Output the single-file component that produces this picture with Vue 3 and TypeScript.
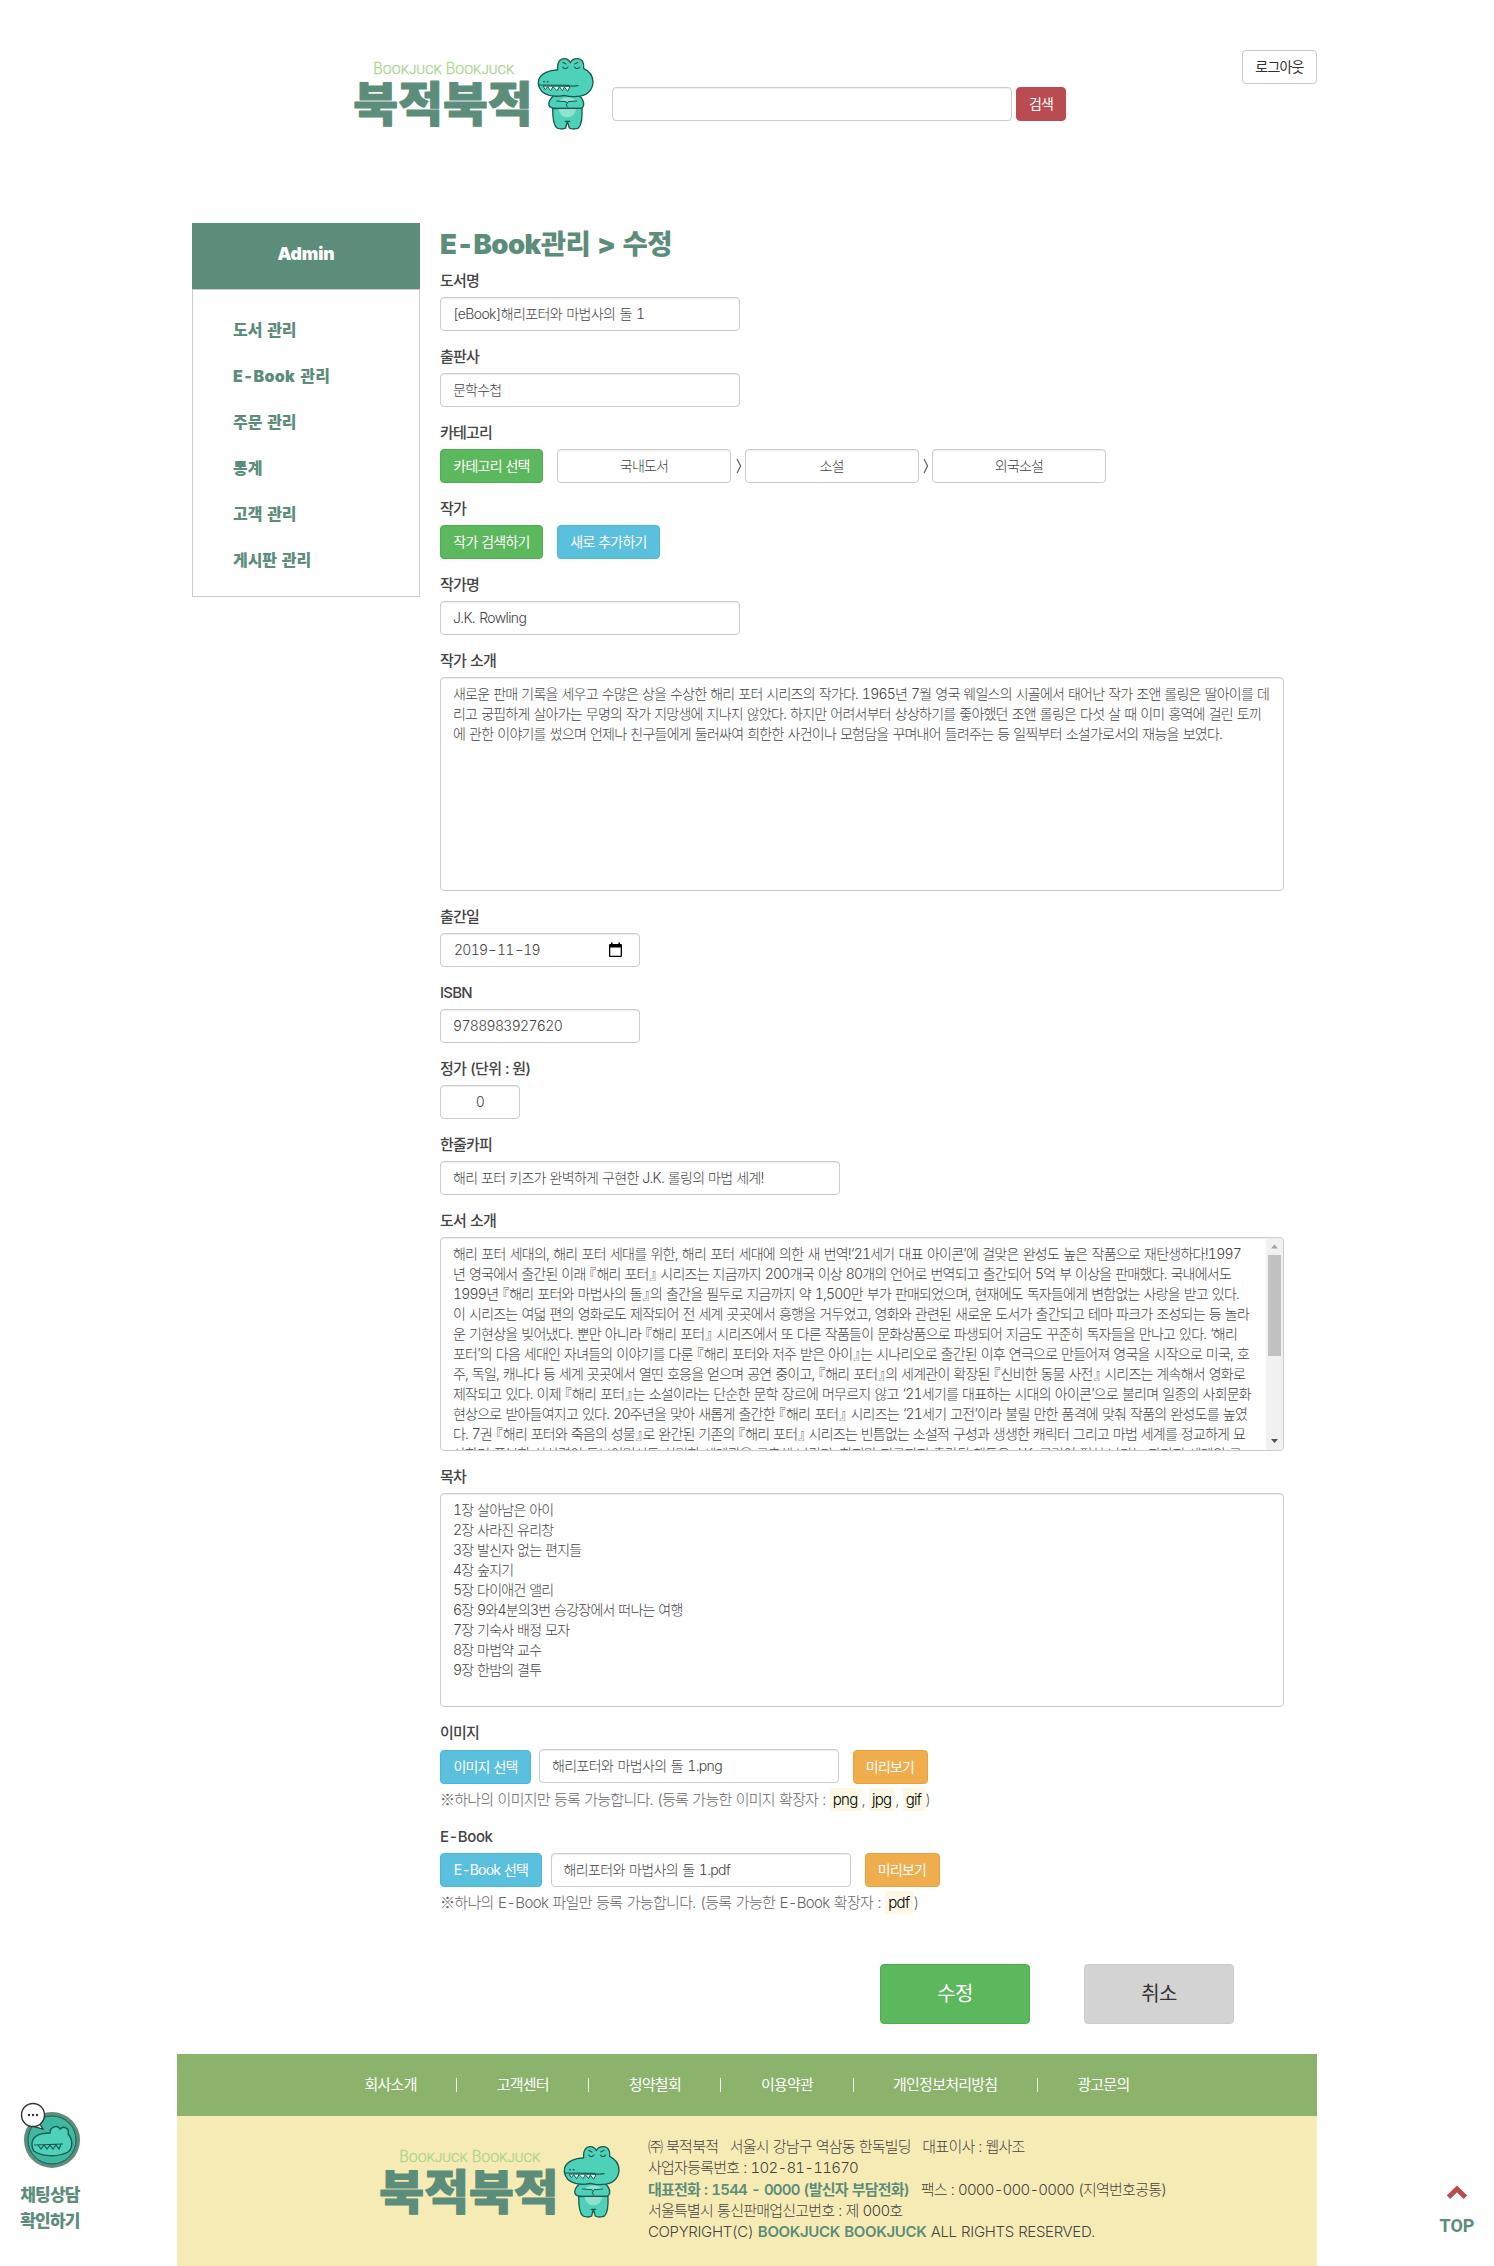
<script setup lang="ts">
import { defineComponent, h } from 'vue'

interface Line {
  text: string
  w: number
}

const menu: string[] = ['도서 관리', 'E-Book 관리', '주문 관리', '통계', '고객 관리', '게시판 관리']

const authorIntro: Line[] = [
  { text: '새로운 판매 기록을 세우고 수많은 상을 수상한 해리 포터 시리즈의 작가다. 1965년 7월 영국 웨일스의 시골에서 태어난 작가 조앤 롤링은 딸아이를 데', w: 816 },
  { text: '리고 궁핍하게 살아가는 무명의 작가 지망생에 지나지 않았다. 하지만 어려서부터 상상하기를 좋아했던 조앤 롤링은 다섯 살 때 이미 홍역에 걸린 토끼', w: 808 },
  { text: '에 관한 이야기를 썼으며 언제나 친구들에게 둘러싸여 희한한 사건이나 모험담을 꾸며내어 들려주는 등 일찍부터 소설가로서의 재능을 보였다.', w: 769 },
]

const bookIntro: Line[] = [
  { text: '해리 포터 세대의, 해리 포터 세대를 위한, 해리 포터 세대에 의한 새 번역!‘21세기 대표 아이콘’에 걸맞은 완성도 높은 작품으로 재탄생하다!1997', w: 788 },
  { text: '년 영국에서 출간된 이래 『해리 포터』 시리즈는 지금까지 200개국 이상 80개의 언어로 번역되고 출간되어 5억 부 이상을 판매했다. 국내에서도', w: 778 },
  { text: '1999년 『해리 포터와 마법사의 돌』의 출간을 필두로 지금까지 약 1,500만 부가 판매되었으며, 현재에도 독자들에게 변함없는 사랑을 받고 있다.', w: 786 },
  { text: '이 시리즈는 여덟 편의 영화로도 제작되어 전 세계 곳곳에서 흥행을 거두었고, 영화와 관련된 새로운 도서가 출간되고 테마 파크가 조성되는 등 놀라', w: 796 },
  { text: '운 기현상을 빚어냈다. 뿐만 아니라 『해리 포터』 시리즈에서 또 다른 작품들이 문화상품으로 파생되어 지금도 꾸준히 독자들을 만나고 있다. ‘해리', w: 784 },
  { text: '포터’의 다음 세대인 자녀들의 이야기를 다룬 『해리 포터와 저주 받은 아이』는 시나리오로 출간된 이후 연극으로 만들어져 영국을 시작으로 미국, 호', w: 796 },
  { text: '주, 독일, 캐나다 등 세계 곳곳에서 열띤 호응을 얻으며 공연 중이고, 『해리 포터』의 세계관이 확장된 『신비한 동물 사전』 시리즈는 계속해서 영화로', w: 792 },
  { text: '제작되고 있다. 이제 『해리 포터』는 소설이라는 단순한 문학 장르에 머무르지 않고 ‘21세기를 대표하는 시대의 아이콘’으로 불리며 일종의 사회문화', w: 798 },
  { text: '현상으로 받아들여지고 있다. 20주년을 맞아 새롭게 출간한 『해리 포터』 시리즈는 ‘21세기 고전’이라 불릴 만한 품격에 맞춰 작품의 완성도를 높였', w: 794 },
  { text: '다. 7권 『해리 포터와 죽음의 성물』로 완간된 기존의 『해리 포터』 시리즈는 빈틈없는 소설적 구성과 생생한 캐릭터 그리고 마법 세계를 정교하게 묘', w: 792 },
  { text: '사하며 풍부한 상상력이 돋보이면서도 치밀한 세계관을 구축해 나간다. 하지만 지금까지 출간된 책들은 J.K. 롤링이 펼쳐 나가는 판타지 세계의 규', w: 788 },
]

const chapters: string[] = [
  '1장 살아남은 아이',
  '2장 사라진 유리창',
  '3장 발신자 없는 편지들',
  '4장 숲지기',
  '5장 다이애건 앨리',
  '6장 9와4분의3번 승강장에서 떠나는 여행',
  '7장 기숙사 배정 모자',
  '8장 마법약 교수',
  '9장 한밤의 결투',
]

const footerLinks: string[] = ['회사소개', '고객센터', '청약철회', '이용약관', '개인정보처리방침', '광고문의']

const INK = '#1c5a50'

const BrandLogo = defineComponent({
  name: 'BrandLogo',
  setup() {
    const p = (d: string, attrs: Record<string, unknown> = {}) =>
      h('path', { d, fill: 'none', stroke: INK, 'stroke-width': 4, 'stroke-linecap': 'round', 'stroke-linejoin': 'round', ...attrs })
    return () =>
      h('svg', { width: 245, height: 76, viewBox: '60 78 735 228', style: 'display:block' }, [
        h('text', { x: 130, y: 131, 'font-size': 47, 'font-family': 'Roboto, Inter, sans-serif', 'font-weight': 300, fill: '#add58f', stroke: '#add58f', 'stroke-width': 1, textLength: 423, lengthAdjust: 'spacingAndGlyphs', style: 'font-variant: small-caps; letter-spacing: 0' }, 'Bookjuck Bookjuck'),
        h('text', { x: 70, y: 272, 'font-size': 139, 'font-family': '"Noto Sans CJK KR", sans-serif', 'font-weight': 900, fill: '#5c8d7b', stroke: '#5c8d7b', 'stroke-width': 3.5, 'stroke-linejoin': 'round', textLength: 538, lengthAdjust: 'spacingAndGlyphs', style: 'letter-spacing: 0' }, '북적북적'),
        p('M668 236 C668 262 670 284 680 293 C684 298 702 298 707 294 L712 274 L718 294 C724 298 741 298 746 293 C755 284 757 258 756 234 Z', { fill: '#4dd2b9' }),
        h('ellipse', { cx: 712, cy: 232, rx: 27, ry: 30, fill: '#8fe2d0' }),
        p('M672 197 C660 205 654 218 657 227 C661 235 672 236 684 235 L742 235 C752 236 760 232 761 225 C762 214 755 203 746 197 Z', { fill: '#4dd2b9' }),
        h('path', { d: 'M688 214 C694 199 731 199 737 214 Z', fill: '#8fe2d0' }),
        p('M680 213 L706 215 M740 213 L715 215 M707 216 L713 219 L708 225 L713 231 M668 235 L755 235', { 'stroke-width': 3 }),
        p('M683 120 C681 96 690 86 703 86 C713 86 718 92 721 98 C724 91 732 86 742 86 C756 86 763 98 761 115 C780 124 789 139 789 157 C788 184 766 199 741 199 C727 202 714 199 703 196 C684 200 663 201 645 191 C629 182 622 164 626 149 C633 131 659 119 683 120 Z', { fill: '#4dd2b9' }),
        p('M626 165 L716 166 C722 171 733 168 744 167', { 'stroke-width': 3.5 }),
        p('M640 169 L646 179 L653 170 L662 182 L669 170 L681 182 L688 170 L698 182 L703 171 L713 184 L720 170 Z', { fill: '#e9fff7', 'stroke-width': 3 }),
        p('M698 97 L708 102 M744 97 L734 102 M698 111 Q706 121 714 111 M733 111 Q741 121 749 111', { 'stroke-width': 3.5 }),
        h('circle', { cx: 642, cy: 155, r: 2.8, fill: INK }),
        h('circle', { cx: 653, cy: 155, r: 2.8, fill: INK }),
        p('M706 274 L719 274', { 'stroke-width': 4 }),
      ])
  },
})
</script>

<template>
  <div class="page">
    <header class="head">
      <BrandLogo class="logo" />
      <form class="search" @submit.prevent>
        <div class="ctl w400"></div>
        <button class="btn red" type="submit">검색</button>
      </form>
      <button class="btn plain logout" type="button">로그아웃</button>
    </header>

    <div class="body">
      <aside class="side">
        <div class="side-title">Admin</div>
        <ul class="side-menu">
          <li v-for="m in menu" :key="m" :class="{ latin: m.startsWith('E') }">{{ m }}</li>
        </ul>
      </aside>

      <main class="main">
        <h1>E-Book관리 &gt; 수정</h1>

        <section class="group">
          <label>도서명</label>
          <div class="ctl w300 title">[eBook]해리포터와 마법사의 돌 1</div>
        </section>
        <section class="group">
          <label>출판사</label>
          <div class="ctl w300">문학수첩</div>
        </section>
        <section class="group">
          <label>카테고리</label>
          <div class="row">
            <button class="btn green w103" type="button">카테고리 선택</button>
            <div class="cats">
              <div class="ctl mid w174">국내도서</div>
              <svg class="sep" width="6" height="16" viewBox="0 0 6 16"><path d="M1 1 L4.6 8 L1 15" /></svg>
              <div class="ctl mid w174">소설</div>
              <svg class="sep" width="6" height="16" viewBox="0 0 6 16"><path d="M1 1 L4.6 8 L1 15" /></svg>
              <div class="ctl mid w174">외국소설</div>
            </div>
          </div>
        </section>
        <section class="group">
          <label>작가</label>
          <div class="row">
            <button class="btn green w103" type="button">작가 검색하기</button>
            <button class="btn blue w103" type="button">새로 추가하기</button>
          </div>
        </section>
        <section class="group">
          <label>작가명</label>
          <div class="ctl w300 title">J.K. Rowling</div>
        </section>
        <section class="group">
          <label>작가 소개</label>
          <div class="ctl area">
            <p v-for="l in authorIntro" :key="l.text" class="line" :style="{ width: l.w + 'px' }">{{ l.text }}</p>
          </div>
        </section>
        <section class="group">
          <label>출간일</label>
          <div class="ctl w200 date">
            <span>2019<i>-</i>11<i>-</i>19</span>
            <svg width="15" height="16" viewBox="0 0 15 16">
              <path d="M2 2 h11 a1 1 0 0 1 1 1 v11 a1 1 0 0 1 -1 1 h-11 a1 1 0 0 1 -1 -1 v-11 a1 1 0 0 1 1 -1 Z M2.3 5.6 v8.1 h10.4 v-8.1 Z" fill="#000" fill-rule="evenodd" />
              <path d="M3 .5 h1.6 v2 h-1.6 Z M10.4 .5 h1.6 v2 h-1.6 Z" fill="#000" />
            </svg>
          </div>
        </section>
        <section class="group">
          <label>ISBN</label>
          <div class="ctl w200 num">9788983927620</div>
        </section>
        <section class="group">
          <label>정가 (단위 : 원)</label>
          <div class="ctl w80 mid">0</div>
        </section>
        <section class="group">
          <label>한줄카피</label>
          <div class="ctl w400 copyline">해리 포터 키즈가 완벽하게 구현한 J.K. 롤링의 마법 세계!</div>
        </section>
        <section class="group">
          <label>도서 소개</label>
          <div class="ctl area scroll">
            <div class="scroll-text">
              <p v-for="l in bookIntro" :key="l.text" class="line" :style="{ width: l.w + 'px' }">{{ l.text }}</p>
            </div>
            <div class="bar">
              <svg width="17" height="17" viewBox="0 0 17 17"><path d="M5 10.5 L8.5 6.5 L12 10.5 Z" fill="#a3a3a3" /></svg>
              <div class="thumb"></div>
              <svg width="17" height="17" viewBox="0 0 17 17"><path d="M5 6 L8.5 10 L12 6 Z" fill="#505050" /></svg>
            </div>
          </div>
        </section>
        <section class="group">
          <label>목차</label>
          <div class="ctl area">
            <p v-for="c in chapters" :key="c">{{ c }}</p>
          </div>
        </section>
        <section class="group file">
          <label>이미지</label>
          <div class="row tall">
            <button class="btn blue w91" type="button">이미지 선택</button>
            <div class="ctl w300 name first title">해리포터와 마법사의 돌 1.png</div>
            <button class="btn orange" type="button">미리보기</button>
          </div>
          <p class="note"><span class="star">※</span>하나의 이미지만 등록 가능합니다. (등록 가능한 이미지 확장자 : <mark>png</mark>, <mark>jpg</mark>, <mark>gif</mark>)</p>
        </section>
        <section class="group file">
          <label class="wide">E-Book</label>
          <div class="row">
            <button class="btn blue w102" type="button">E-Book 선택</button>
            <div class="ctl w300 name title">해리포터와 마법사의 돌 1.pdf</div>
            <button class="btn orange" type="button">미리보기</button>
          </div>
          <p class="note long"><span class="star">※</span>하나의 E-Book 파일만 등록 가능합니다. (등록 가능한 E-Book 확장자 : <mark>pdf</mark>)</p>
        </section>

        <div class="actions">
          <button class="btn green big" type="button">수정</button>
          <button class="btn gray big" type="button">취소</button>
        </div>
      </main>
    </div>

    <footer class="foot">
      <nav class="foot-nav">
        <template v-for="(f, i) in footerLinks" :key="f">
          <i v-if="i > 0"></i>
          <a>{{ f }}</a>
        </template>
      </nav>
      <div class="foot-info">
        <BrandLogo />
        <address>
          <p class="addr">㈜ 북적북적 &nbsp; 서울시 강남구 역삼동 한독빌딩 &nbsp; 대표이사 : 웹사조</p>
          <p class="reg">사업자등록번호 : 102-81-11670</p>
          <p><b>대표전화 : 1544 - 0000 (발신자 부담전화)</b> &nbsp; <span class="fax">팩스 : 0000-000-0000 (지역번호공통)</span></p>
          <p>서울특별시 통신판매업신고번호 : 제 000호</p>
          <p class="copy">COPYRIGHT(C) <b>BOOKJUCK BOOKJUCK</b> ALL RIGHTS RESERVED.</p>
        </address>
      </div>
    </footer>

    <a class="chat">
      <svg width="62" height="70" viewBox="0 0 62 70">
        <circle cx="33" cy="39" r="28" fill="#5c8d7b" />
        <circle cx="33" cy="39" r="24" fill="#3fb8a2" stroke="#1c5a50" stroke-width="1" />
        <path d="M13 42 C14 33 24 32 31 32 C31 25 39 24 41 28 C45 24 51 28 49 33 C54 38 54 47 49 51 C38 57 21 55 15 50 C13 48 13 45 13 42 Z" fill="#4dd2b9" stroke="#1c5a50" stroke-width="1.4" />
        <path d="M15 44 L44 43 M19 44 L22 48 L25 44 L28 48 L31 44 L34 48 L37 44 L40 48 L42 43" fill="none" stroke="#1c5a50" stroke-width="1.2" />
        <path d="M20 22 L24 28 L13 25 Z" fill="#fff" stroke="#333" stroke-width="1.2" />
        <circle cx="14" cy="14" r="11.5" fill="#fff" stroke="#333" stroke-width="1.4" />
        <g fill="#333"><circle cx="10" cy="14" r="1.2" /><circle cx="14" cy="14" r="1.2" /><circle cx="18" cy="14" r="1.2" /></g>
      </svg>
      <span>채팅상담<br />확인하기</span>
    </a>
    <a class="top">
      <svg width="22" height="15" viewBox="0 0 22 15"><path d="M2.5 12.2 L11 4 L19.5 12.2" fill="none" stroke="#bb4b52" stroke-width="5" /></svg>
      <span>TOP</span>
    </a>
  </div>
</template>

<style>
body {
  margin: 0;
  background: #fff;
}
</style>

<style scoped>
* {
  box-sizing: border-box;
}
.page {
  position: relative;
  width: 1494px;
  height: 2266px;
  overflow: hidden;
  font-family: Inter, "Noto Sans CJK KR", sans-serif;
  font-feature-settings: "tnum", "halt";
  font-size: 14px;
  line-height: 20px;
  font-weight: 300;
  letter-spacing: -0.055em;
  word-spacing: 0.05em;
  color: #444;
}
p {
  margin: 0;
  white-space: nowrap;
}
.head {
  display: flex;
  align-items: flex-start;
  width: 1140px;
  height: 223px;
  margin: 0 auto;
  padding-left: 173px;
}
.logo {
  margin-top: 56px;
}
.search {
  display: flex;
  gap: 4px;
  margin: 87px 0 0 17px;
}
.logout {
  margin: 50px 0 0 auto;
  width: 75px;
}
.btn {
  height: 34px;
  padding: 0;
  border: 1px solid;
  border-radius: 4px;
  font: inherit;
  font-weight: 400;
  letter-spacing: inherit;
  word-spacing: inherit;
  color: #fff;
  text-align: center;
  white-space: nowrap;
  flex: none;
}
.plain { background: #fff; border-color: #ccc; color: #333; }
.red { background: #bb4b52; border-color: #bb4b52; width: 50px; }
.green { background: #5cb85c; border-color: #4cae4c; }
.blue { background: #5bc0de; border-color: #46b8da; }
.orange { background: #f0ad4e; border-color: #eea236; width: 75px; }
.gray { background: #d3d3d3; border-color: #ccc; color: #333; }
.big {
  width: 150px;
  height: 60px;
  font-size: 20px;
}
.ctl {
  height: 34px;
  padding: 6px 12px;
  border: 1px solid #ccc;
  border-radius: 4px;
  background: #fff;
  box-shadow: inset 0 1px 1px rgba(0, 0, 0, 0.075);
  white-space: nowrap;
  flex: none;
}
.w80 { width: 80px; }
.w91 { width: 91px; }
.w102 { width: 102px; }
.w103 { width: 103px; }
.w174 { width: 174px; }
.w200 { width: 200px; }
.w300 { width: 300px; }
.w400 { width: 400px; }
.mid { text-align: center; }
.num { letter-spacing: -0.048em; }
.title {
  letter-spacing: -0.045em;
  word-spacing: 0.08em;
}
.copyline {
  letter-spacing: -0.05em;
}
.body {
  display: flex;
  width: 1140px;
  height: 1831px;
  margin: 0 auto;
  padding-left: 15px;
  gap: 20px;
}
.side {
  width: 228px;
  flex: none;
  font-weight: 900;
  font-size: 16px;
  letter-spacing: -0.005em;
}
.side-title {
  height: 66px;
  line-height: 62px;
  background: #5c8d7b;
  color: #fff;
  text-align: center;
  font-size: 17.5px;
}
.side-menu {
  margin: 0;
  padding: 17px 0 0 40px;
  height: 308px;
  border: 1px solid #ccc;
  list-style: none;
  color: #5c8d7b;
}
.side-menu li {
  height: 46px;
  line-height: 46px;
}
.side-menu .latin {
  letter-spacing: 0.015em;
}
.main {
  width: 844px;
  flex: none;
}
h1 {
  margin: 0;
  height: 47px;
  line-height: 42px;
  font-size: 27.5px;
  font-weight: 900;
  letter-spacing: -0.02em;
  color: #5c8d7b;
  white-space: nowrap;
}
.group {
  margin-bottom: 15px;
}
label {
  display: block;
  padding-top: 1px;
  margin-bottom: 6px;
  font-size: 15px;
  font-weight: 500;
}
.wide {
  letter-spacing: -0.03em;
}
.row {
  display: flex;
  gap: 14px;
}
.tall {
  height: 35px;
}
.tall .btn {
  margin-top: 1px;
}
.cats {
  display: flex;
  align-items: center;
}
.sep {
  margin: 0 3px 0 4.5px;
  fill: none;
  stroke: #555;
  stroke-width: 1.1;
}
.area {
  width: 844px;
  height: 214px;
}
.line {
  text-align: justify;
  text-align-last: justify;
  letter-spacing: -0.055em;
  word-spacing: 0;
}
.scroll {
  display: flex;
  justify-content: space-between;
  padding: 0 0 0 12px;
  overflow: hidden;
}
.scroll-text {
  padding-top: 6px;
}
.bar {
  display: flex;
  flex-direction: column;
  align-items: center;
  width: 17px;
  height: 212px;
  background: #f1f1f1;
}
.thumb {
  width: 13px;
  height: 101px;
  margin-bottom: auto;
  background: #c1c1c1;
}
.date {
  display: flex;
  justify-content: space-between;
  padding: 6px 16px 6px 13px;
  letter-spacing: -0.05em;
}
.date i {
  display: inline-block;
  width: 9.5px;
  text-align: center;
  font-style: normal;
  transform: scaleX(1.4);
}
.date svg {
  margin-top: 2px;
}
.file {
  margin-bottom: 17px;
}
.file .row {
  gap: 0;
}
.name {
  margin: 0 14px 0 8.5px;
}
.first {
  margin-left: 8px;
  margin-right: 13.5px;
}
.note {
  height: 20px;
  margin-top: 5px;
  font-size: 15px;
  letter-spacing: -0.05em;
  word-spacing: 0.06em;
  color: #666;
}
.long {
  letter-spacing: -0.044em;
}
.star {
  font-family: "Noto Sans CJK KR", sans-serif;
}
mark {
  padding: 2px 4px 2px 3px;
  background: #fcf8e3;
  color: #000;
}
.actions {
  display: flex;
  gap: 54px;
  margin: 52px 0 0 440px;
}
.foot {
  width: 1140px;
  margin: 0 auto;
  font-size: 15px;
}
.foot-nav {
  display: flex;
  justify-content: center;
  align-items: center;
  gap: 39.5px;
  height: 62px;
  padding-bottom: 1px;
  background: #8cb36b;
  color: #fff;
  font-weight: 400;
}
.foot-nav i {
  width: 1px;
  height: 14px;
  background: #fff;
}
.foot-info {
  display: flex;
  height: 150px;
  padding: 28px 0 0 199px;
  background: #f7ebb5;
}
address {
  margin: -8px 0 0 27px;
  font-style: normal;
  line-height: 21.3px;
}
address b {
  font-weight: 600;
  color: #5c8d7b;
}
.addr {
  word-spacing: 0.04em;
}
.reg {
  letter-spacing: -0.05em;
}
.fax {
  letter-spacing: -0.052em;
}
.copy {
  letter-spacing: -0.023em;
}
.chat {
  position: absolute;
  left: 19px;
  top: 2101px;
  width: 62px;
  text-align: center;
  font-size: 17px;
  font-weight: 900;
  line-height: 26px;
  color: #5c8d7b;
}
.chat svg {
  display: block;
  margin-bottom: 11px;
}
.top {
  position: absolute;
  left: 1437px;
  top: 2185px;
  width: 40px;
  text-align: center;
  font-family: Roboto, sans-serif;
  font-size: 18px;
  font-weight: 700;
  letter-spacing: 0;
  color: #5c8d7b;
}
.top svg {
  display: block;
  margin: 0 auto 16px;
}
</style>
